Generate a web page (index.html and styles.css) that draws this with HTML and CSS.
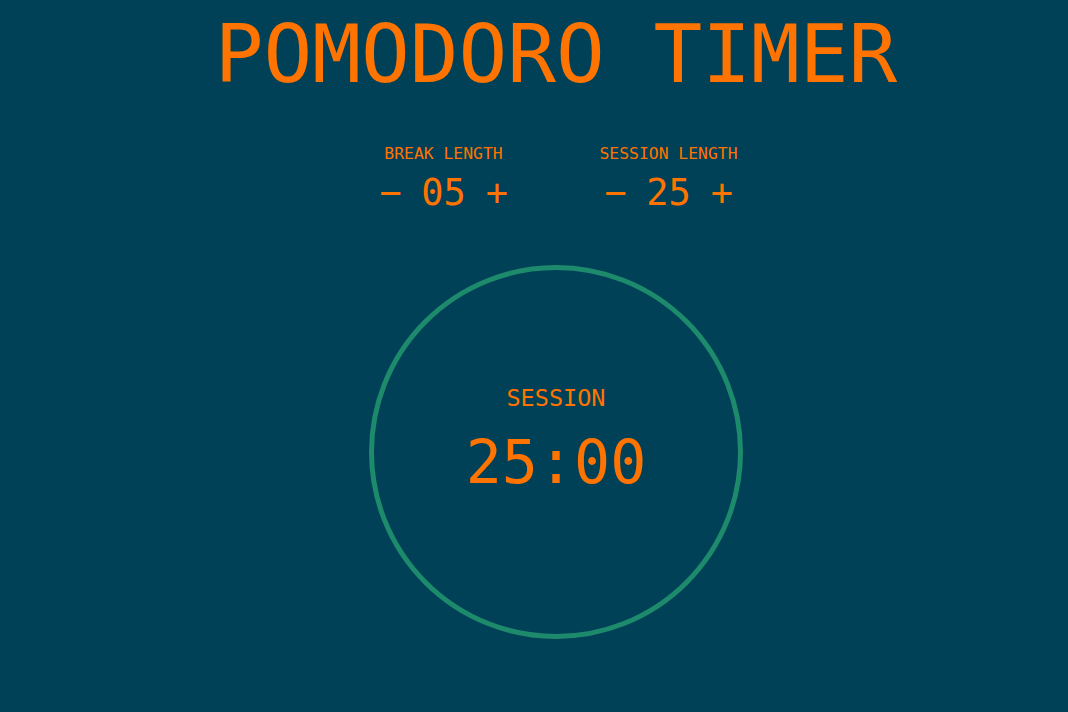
FILE: index.html
```html
<!DOCTYPE html>
<html lang="en">
<head>
<meta charset="utf-8">
<title>Pomodoro Timer</title>
<link rel="stylesheet" href="styles.css">
</head>
<body>
<main class="app">
  <h1 class="title">POMODORO TIMER</h1>
  <section class="settings">
    <div class="setting">
      <div class="setting-label">BREAK LENGTH</div>
      <div class="setting-controls">
        <button class="ctrl">−</button>
        <span class="setting-value">05</span>
        <button class="ctrl">+</button>
      </div>
    </div>
    <div class="setting">
      <div class="setting-label">SESSION LENGTH</div>
      <div class="setting-controls">
        <button class="ctrl">−</button>
        <span class="setting-value">25</span>
        <button class="ctrl">+</button>
      </div>
    </div>
  </section>
  <section class="timer">
    <div class="timer-label">SESSION</div>
    <div class="timer-time">25:00</div>
  </section>
</main>
</body>
</html>
```
FILE: styles.css
```css
html, body {
  margin: 0;
  padding: 0;
  background: #004158;
  height: 100%;
}
body {
  font-family: "DejaVu Sans Mono", "Liberation Mono", monospace;
  color: #ff7300;
}
.app {
  display: flex;
  flex-direction: column;
  align-items: center;
  padding: 14px 0 0 44px;
}
.title {
  margin: 0;
  font-size: 81px;
  line-height: 81px;
  font-weight: normal;
  white-space: pre;
}
.settings {
  display: flex;
  gap: 45px;
  margin-top: 49px;
}
.setting {
  width: 180px;
  display: flex;
  flex-direction: column;
  align-items: center;
}
.setting-label {
  font-size: 16.4px;
  line-height: 20px;
}
.setting-controls {
  margin-top: 9px;
  display: flex;
  align-items: center;
  gap: 20px;
  font-size: 37px;
  line-height: 40px;
}
.ctrl {
  background: none;
  border: 0;
  padding: 0;
  width: 22px;
  font: inherit;
  color: inherit;
  line-height: 40px;
  cursor: pointer;
}
.setting-value {
  display: block;
}
.timer {
  margin-top: 52px;
  box-sizing: border-box;
  width: 374px;
  height: 374px;
  border: 5px solid #1e8a6c;
  border-radius: 50%;
  display: flex;
  flex-direction: column;
  align-items: center;
  justify-content: center;
  gap: 21px;
  padding-bottom: 28px;
}
.timer-label {
  font-size: 23.5px;
  line-height: 26px;
}
.timer-time {
  font-size: 60px;
  line-height: 60px;
}
```
